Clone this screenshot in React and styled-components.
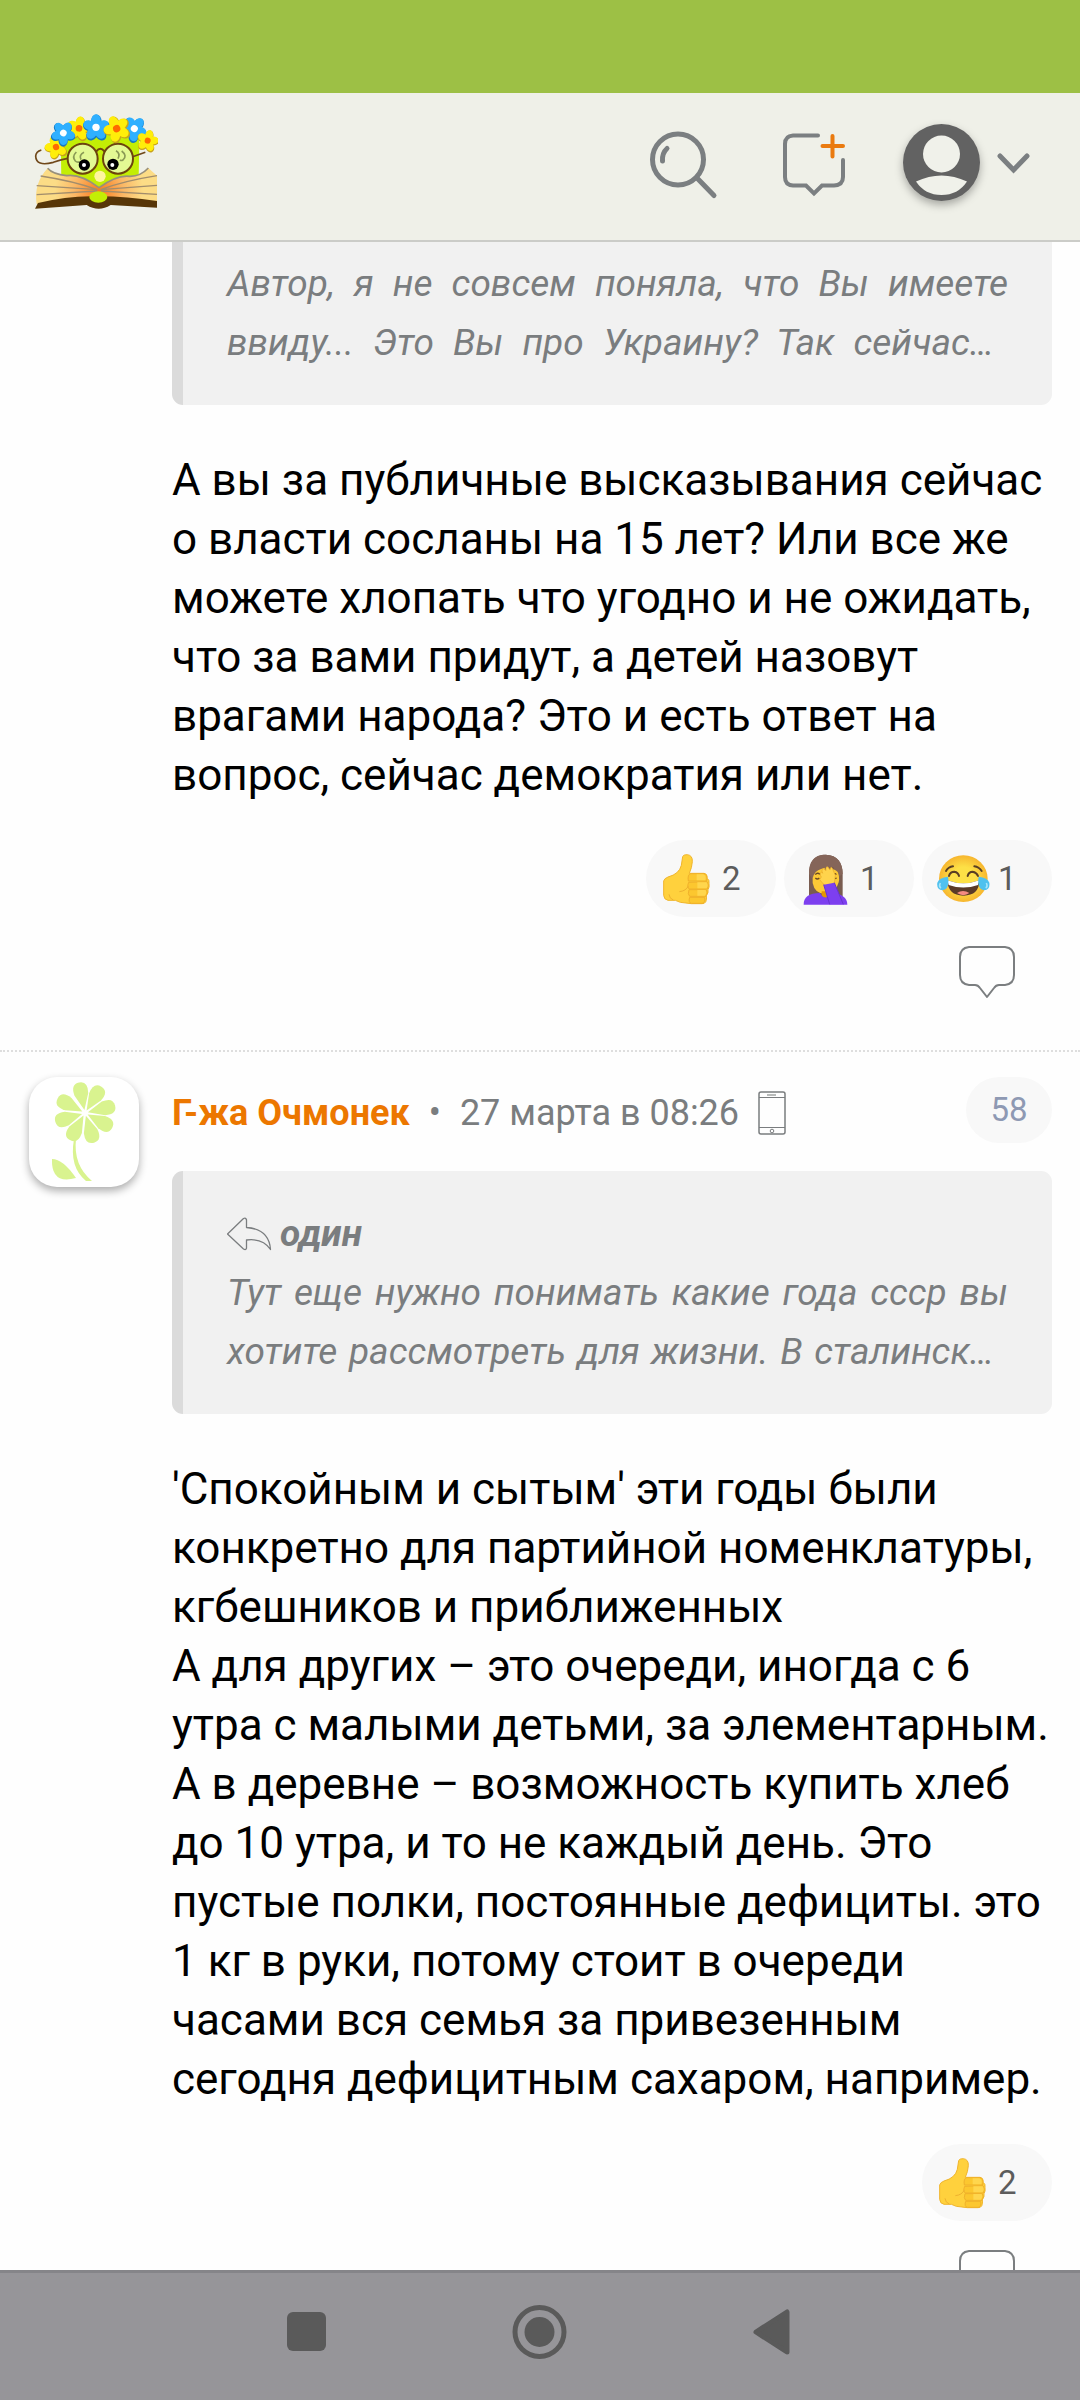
import React from "react";
import styled, { createGlobalStyle } from "styled-components";

const GlobalStyle = createGlobalStyle`
  * { box-sizing: border-box; }
  body {
    margin: 0;
    background: #fefefe;
    color: #000;
    font-family: Roboto, "Noto Sans", sans-serif;
  }
  button {
    margin: 0;
    padding: 0;
    border: 0;
    background: none;
    font: inherit;
    color: inherit;
    cursor: pointer;
  }
  svg { display: block; flex: none; }
`;

const Screen = styled.div`
  display: flex;
  flex-direction: column;
  height: 100vh;
`;

const StatusBar = styled.div`
  flex: none;
  height: 93px;
  background: #9dc045;
`;

const Header = styled.header`
  flex: none;
  display: flex;
  align-items: center;
  justify-content: space-between;
  padding: 19px 48px 31px 33px;
  background: #eff0e8;
  border-bottom: 2px solid #cbccc8;
`;

const Actions = styled.nav`
  display: flex;
  align-items: center;
  gap: 54px;
`;

const AccountButton = styled.button`
  display: flex;
  align-items: center;
  gap: 14px;
`;

const AccountPicture = styled.svg`
  overflow: visible;
  filter: drop-shadow(0 4px 4px rgba(0, 0, 0, 0.3));
`;

const Feed = styled.main`
  flex: 1;
  min-height: 0;
  overflow: hidden;
`;

const Comment = styled.article`
  display: grid;
  grid-template-columns: 110px minmax(0, 1fr);
  column-gap: 33px;
  padding: ${(p) => (p.$continued ? "0" : "25px")} 28px 51px 29px;

  & + & {
    border-top: 2px dotted #dedede;
  }
`;

const Content = styled.div`
  grid-column: 2;
`;

const Avatar = styled.a`
  display: block;
  width: 110px;
  height: 110px;
  overflow: hidden;
  border-radius: 28px;
  background: #fff;
  box-shadow: 0 4px 8px rgba(0, 0, 0, 0.32);
`;

const CommentHead = styled.div`
  display: flex;
  align-items: flex-start;
  justify-content: space-between;
  margin-bottom: 22px;
`;

const Meta = styled.div`
  display: flex;
  align-items: center;
  gap: 19px;
  font-size: 36px;
  line-height: 72px;
  color: #7a7d7f;
`;

const Author = styled.a`
  color: #ec7700;
  font-weight: 700;
  text-decoration: none;
`;

const CommentNumber = styled.a`
  min-width: 86px;
  border-radius: 33px;
  background: #f8f8f8;
  color: #8e99b3;
  font-size: 33px;
  line-height: 66px;
  text-align: center;
  text-decoration: none;
`;

const Quote = styled.blockquote`
  margin: 0;
  padding: ${(p) => (p.$continued ? "12px" : "33px")} 44px 33px;
  border-left: 11px solid #dbdbdb;
  border-radius: ${(p) => (p.$continued ? "0 0 11px 11px" : "11px")};
  background: #f1f1f1;
  color: #7a7d7f;
  font-size: 37px;
  font-style: italic;
  line-height: 59px;
`;

const QuoteAuthor = styled.div`
  display: flex;
  align-items: center;
  gap: 7px;
  font-weight: 700;
`;

const QuoteLine = styled.span`
  display: block;
  padding-right: ${(p) => (p.$cut ? "14px" : "0")};
  text-align: justify;
  text-align-last: justify;
  white-space: nowrap;
`;

const Body = styled.p`
  margin: 46px 0 35px;
  font-size: 44px;
  line-height: 59px;
`;

const Reactions = styled.div`
  display: flex;
  justify-content: flex-end;
  gap: 8px;
`;

const Reaction = styled.button`
  display: flex;
  align-items: center;
  gap: 7px;
  width: 130px;
  height: 77px;
  padding-left: 15px;
  border-radius: 39px;
  background: #f8f8f8;
  color: #5c5c5c;
  font-size: 33px;
`;

const ReplyRow = styled.div`
  display: flex;
  justify-content: flex-end;
  padding: 28px 36px 0 0;
`;

const SystemNav = styled.nav`
  flex: none;
  display: flex;
  justify-content: center;
  gap: 173px;
  padding: 29px 0 38px;
  border-top: 3px solid #858589;
  background: #969599;
`;

const PETALS = [0, 72, 144, 216, 288];

function Blossom({ x, y, fill, edge, heart, turn = 0, scale = 1 }) {
  return (
    <g transform={`translate(${x} ${y}) rotate(${turn}) scale(${scale})`}>
      {PETALS.map((a) => (
        <ellipse key={a} cx="0" cy="-20" rx="14" ry="18" fill={edge} transform={`translate(1 3) rotate(${a})`} />
      ))}
      {PETALS.map((a) => (
        <ellipse key={a} cx="0" cy="-19" rx="13" ry="17" fill={fill} transform={`rotate(${a})`} />
      ))}
      <circle r="10" fill={heart} />
    </g>
  );
}

function Logo() {
  const blue = { fill: "#2fb0ff", edge: "#1579c4", heart: "#fff" };
  const yellow = { fill: "#ffee0a", edge: "#c9a31a", heart: "#ff6a00" };
  return (
    <svg width="125" height="97" viewBox="39 21 375 291" role="img" aria-label="Логотип">
      <defs>
        <radialGradient id="pages" gradientUnits="userSpaceOnUse" cx="237" cy="258" r="165">
          <stop offset="0" stopColor="#f97a1c" />
          <stop offset="0.45" stopColor="#fbb866" />
          <stop offset="0.8" stopColor="#fcdc86" />
        </radialGradient>
      </defs>
      <path d="M122 100Q240 70 358 100L356 220L240 262L124 220Z" fill="#c3ee05" />
      <path d="M143 160Q120 165 100 172Q48 186 47 153Q48 140 64 135" fill="none" stroke="#70481a" strokeWidth="5" />
      <path d="M338 155L376 142" stroke="#70481a" strokeWidth="5" />
      <path d="M83 190Q98 208 140 212Q175 206 237 248Q292 208 330 214Q362 214 385 189L411 212V300L237 276L50 298Q40 235 83 190Z" fill="url(#pages)" />
      <path d="M83 190Q98 208 140 212Q182 206 237 248Q292 208 330 214Q362 214 385 189" fill="none" stroke="#98907c" strokeWidth="5" />
      <path d="M62 213Q160 228 232 254L50 242M232 258L50 269M411 212Q310 228 242 254L411 241M242 258L411 268" stroke="#a28d6c" strokeWidth="4" fill="none" />
      <path d="M45 311L54 294Q150 270 237 274Q320 274 411 288V308L272 300Q236 323 200 300Z" fill="#573608" />
      <ellipse cx="235" cy="276" rx="27" ry="17" fill="#c3ee05" />
      <circle cx="240" cy="214" r="17" fill="#fff5a0" />
      <circle cx="188" cy="161" r="45" fill="#e3f993" stroke="#6c430e" strokeWidth="6" />
      <circle cx="294" cy="161" r="45" fill="#e3f993" stroke="#6c430e" strokeWidth="6" />
      <path d="M229 139Q241 124 253 139" fill="none" stroke="#6c430e" strokeWidth="6" />
      <path d="M169 141Q155 155 166 168Q172 174 180 170M192 142Q176 150 183 164M288 137Q302 145 294 161M305 138Q323 152 309 165Q304 168 300 165" fill="none" stroke="#8a9a55" strokeWidth="5" />
      <circle cx="193" cy="180" r="17" />
      <circle cx="192" cy="180" r="6" fill="#fff" />
      <circle cx="279" cy="178" r="17" />
      <circle cx="277" cy="180" r="6" fill="#fff" />
      <Blossom x={108} y={126} turn={-20} scale={0.95} {...yellow} />
      <Blossom x={177} y={70} turn={10} scale={1} {...yellow} />
      <Blossom x={130} y={84} turn={35} scale={1} {...blue} />
      <Blossom x={343} y={71} turn={40} scale={1.05} {...blue} />
      <Blossom x={228} y={67} turn={0} scale={1.1} {...blue} />
      <Blossom x={290} y={71} turn={-25} scale={1.1} {...yellow} />
      <Blossom x={383} y={107} turn={15} scale={0.9} {...yellow} />
    </svg>
  );
}

function SearchIcon() {
  return (
    <svg width="77" height="78" viewBox="646 121 77 78" fill="none" stroke="#7b7f81" strokeWidth="5" strokeLinecap="round">
      <circle cx="678" cy="158.500" r="25.500" />
      <path d="M697 177L714 194.500M667 147.500Q662 152 662.500 160" />
    </svg>
  );
}

function NewTopicIcon() {
  return (
    <svg width="71" height="78" viewBox="777 121 71 78" fill="none" stroke="#7b7f81" strokeWidth="4" strokeLinecap="round">
      <path d="M818 134.500H793Q785 135 785 143V176Q785 184 793 184.500H806L814 192.500L822 184.500H834Q843 184 843 176V159" />
      <path d="M822.500 145H843M832.500 135V155.500" stroke="#ea7a0f" />
    </svg>
  );
}

function AccountIcon() {
  return (
    <AccountPicture width="80" height="78" viewBox="902 121 80 78">
      <circle cx="941.500" cy="161.500" r="38.500" fill="#626262" />
      <circle cx="941.500" cy="153" r="18.500" fill="#f0f1ea" />
      <path d="M916 180.500Q941.500 168.500 967 180.500Q958 194 941.500 194Q925 194 916 180.500Z" fill="#f0f1ea" />
    </AccountPicture>
  );
}

function ChevronIcon() {
  return (
    <svg width="36" height="78" viewBox="996 121 36 78" fill="none" stroke="#7b7f81" strokeWidth="5" strokeLinecap="round">
      <path d="M1000 155L1013.500 169L1027 155" />
    </svg>
  );
}

function ThumbEmoji() {
  return (
    <svg width="54" height="54" viewBox="123 120 162 162">
      <path d="M188 134Q190 127 202 128Q218 130 217 149Q216 166 208 184H252Q262 185 261 199Q269 203 267 215Q269 225 264 233Q266 244 259 250Q262 276 246 275Q215 277 181 271L166 265H144Q132 263 131 250V207Q133 199 144 195Q178 186 184 160Z" fill="#ffd13d" stroke="#f0b52c" strokeWidth="3" strokeLinejoin="round" />
      <path d="M212 185Q202 187 205 207H260Q264 186 252 185ZM206 211Q200 226 208 231H262Q269 220 261 209ZM207 233Q202 247 209 253H258Q266 241 259 233ZM209 256Q204 272 214 274H247Q257 271 254 256Z" fill="#fcc72f" stroke="#f0b12b" strokeWidth="3" />
      <path d="M230 187H250Q260 192 256 205H230ZM232 211H260Q266 221 260 229H232ZM232 234H257Q261 244 254 251H232Z" fill="#ffd64d" />
      <path d="M178 239Q198 237 205 222M147 247Q148 260 160 264" fill="none" stroke="#eeb12f" strokeWidth="3" />
    </svg>
  );
}

function FacepalmEmoji() {
  return (
    <svg width="54" height="54" viewBox="537 120 162 162">
      <path d="M617 128C576 128 567 160 567 185V258H668V185C668 153 652 128 617 128Z" fill="#795c50" />
      <path d="M567 185C567 150 580 128 617 128C652 128 668 153 668 185L656 195Q645 180 640 165Q600 165 588 180L577 200Z" fill="#856559" />
      <path d="M578 198Q584 176 603 171L613 167L617 174Q640 165 653 180Q660 197 656 211Q647 244 617 246Q584 246 578 213Z" fill="#fcc936" />
      <path d="M605 238H627V252Q616 264 605 252Z" fill="#e59600" />
      <path d="M551 278Q550 244 600 243Q616 270 632 243Q682 246 682 278Z" fill="#7d3fef" />
      <path d="M586 188Q592 180 600 187M586 198Q592 204 598 198M638 188Q645 182 649 188M645 200L650 198" stroke="#6b4b24" strokeWidth="4" fill="none" />
      <path d="M599 203L611 217L622 223L643 213L646 190L637 169Q632 161 630 174L624 165Q616 162 618 176L610 170Q603 171 608 184L605 180Q597 183 604 195Z" fill="#ffd34c" stroke="#e9a92b" strokeWidth="2" />
      <path d="M611 218L643 212L670 277H629Z" fill="#7d3fef" />
      <path d="M611 218L629 277M643 212L670 277" stroke="#6733cf" strokeWidth="3" />
    </svg>
  );
}

function JoyEmoji() {
  return (
    <svg width="54" height="54" viewBox="951 120 162 162">
      <defs>
        <radialGradient id="joy">
          <stop offset="0.5" stopColor="#fde046" />
          <stop offset="1" stopColor="#f7b62f" />
        </radialGradient>
      </defs>
      <ellipse cx="1030" cy="200" rx="73" ry="70" fill="url(#joy)" />
      <path d="M978 177Q985 165 999 163M1063 163Q1077 165 1085 177M987 192Q990 179 1003 179Q1015 181 1017 192M1043 192Q1046 179 1058 179Q1070 181 1074 192" fill="none" stroke="#5a3f23" strokeWidth="6" strokeLinecap="round" />
      <path d="M982 205Q1030 223 1078 205Q1078 251 1030 251Q984 251 982 205Z" fill="#5a3a28" />
      <path d="M982 205Q1030 223 1078 205L1074 219Q1030 234 986 219Z" fill="#fff" />
      <path d="M1011 243Q1029 231 1048 243Q1030 256 1011 243Z" fill="#f48b82" />
      <path d="M984 194Q990 233 967 235Q949 233 952 212Q957 197 984 194ZM1076 194Q1070 233 1093 235Q1111 233 1108 212Q1103 197 1076 194Z" fill="#4fc1ee" />
      <path d="M961 213Q956 224 963 228M1099 213Q1104 224 1097 228" fill="none" stroke="#a6e4fa" strokeWidth="5" />
    </svg>
  );
}

function BubbleIcon() {
  return (
    <svg width="58" height="54" viewBox="0 0 58 54" fill="none" stroke="#7b7e80" strokeWidth="2" strokeLinejoin="round">
      <path d="M11 2H47Q56 3 56 12V30Q56 39 47 40H41Q38 40 36 43L29 52L22 43Q20 40 17 40H11Q2 39 2 30V12Q2 3 11 2Z" />
    </svg>
  );
}

function PhoneIcon() {
  return (
    <svg width="28" height="44" viewBox="0 0 28 44" fill="none" stroke="#7a7d7f">
      <rect x="1" y="1" width="26" height="42" rx="2" strokeWidth="1.500" />
      <path d="M1 6.500H27M1 36.500H27" />
      <path d="M9 4H18" stroke="#b8bbba" strokeWidth="2" />
      <circle cx="14" cy="40" r="1.800" />
    </svg>
  );
}

function ReplyArrowIcon() {
  return (
    <svg width="46" height="36" viewBox="227 1217 46 36" fill="none" stroke="#7a7d7f" strokeWidth="1.300" strokeLinejoin="round">
      <path d="M227.500 1235L243.500 1219.500Q246 1218.500 246.500 1221V1228.500Q269 1230 270.500 1250.500Q263 1239 246.500 1241V1249Q246 1251.500 243.500 1250Z" />
    </svg>
  );
}

const DAISY = [-11, 32, 76, 119, 163, 209, 253, 298];

function DaisyPicture() {
  return (
    <svg width="110" height="110" viewBox="0 0 110 110" fill="#d9f38f">
      {DAISY.map((a) => (
        <path key={a} d="M0 -3L-7 -19Q-9 -31 0 -31Q9 -31 7 -19Z" transform={`translate(56 36) rotate(${a})`} />
      ))}
      <path d="M45 62Q40 90 57 104H63Q44 88 47 62Z" />
      <path d="M23 82Q34 82 47 101Q22 108 23 82Z" />
    </svg>
  );
}

const EMOJI = { thumb: ThumbEmoji, facepalm: FacepalmEmoji, joy: JoyEmoji };

function CommentFooter({ reactions }) {
  return (
    <>
      <Reactions>
        {reactions.map(([name, label, count]) => {
          const Emoji = EMOJI[name];
          return (
            <Reaction key={name} type="button" aria-label={`${label}: ${count}`}>
              <Emoji />
              {count}
            </Reaction>
          );
        })}
      </Reactions>
      <ReplyRow>
        <button type="button" aria-label="Ответить"><BubbleIcon /></button>
      </ReplyRow>
    </>
  );
}

export default function App() {
  return (
    <>
      <GlobalStyle />
      <Screen>
        <StatusBar />
        <Header>
          <a href="#home" aria-label="На главную"><Logo /></a>
          <Actions>
            <button type="button" aria-label="Поиск"><SearchIcon /></button>
            <button type="button" aria-label="Новая тема"><NewTopicIcon /></button>
            <AccountButton type="button" aria-label="Профиль">
              <AccountIcon />
              <ChevronIcon />
            </AccountButton>
          </Actions>
        </Header>

        <Feed>
          <Comment $continued>
            <Content>
              <Quote $continued>
                <QuoteLine>Автор, я не совсем поняла, что Вы имеете</QuoteLine>
                <QuoteLine $cut>ввиду... Это Вы про Украину? Так сейчас…</QuoteLine>
              </Quote>
              <Body>
                А вы за публичные высказывания сейчас о власти сосланы на 15 лет? Или все же можете хлопать что
                угодно и не ожидать, что за вами придут, а детей назовут врагами народа? Это и есть ответ на
                вопрос, сейчас демократия или нет.
              </Body>
              <CommentFooter
                reactions={[["thumb", "Нравится", 2], ["facepalm", "Рука-лицо", 1], ["joy", "Смешно", 1]]}
              />
            </Content>
          </Comment>

          <Comment>
            <Avatar href="#author" aria-label="Г-жа Очмонек"><DaisyPicture /></Avatar>
            <Content>
              <CommentHead>
                <Meta>
                  <Author href="#author">Г-жа Очмонек</Author>
                  <span>•</span>
                  <time>27 марта в 08:26</time>
                  <PhoneIcon />
                </Meta>
                <CommentNumber href="#58">58</CommentNumber>
              </CommentHead>
              <Quote>
                <QuoteAuthor>
                  <ReplyArrowIcon />
                  один
                </QuoteAuthor>
                <QuoteLine>Тут еще нужно понимать какие года ссср вы</QuoteLine>
                <QuoteLine $cut>хотите рассмотреть для жизни. В сталинск…</QuoteLine>
              </Quote>
              <Body>
                'Спокойным и сытым' эти годы были конкретно для партийной номенклатуры, кгбешников и приближенных
                <br />
                А для других – это очереди, иногда с 6 утра с малыми детьми, за элементарным.
                <br />
                А в деревне – возможность купить хлеб до 10 утра, и то не каждый день. Это пустые полки,
                постоянные дефициты. это 1 кг в руки, потому стоит в очереди часами вся семья за привезенным
                сегодня дефицитным сахаром, например.
              </Body>
              <CommentFooter reactions={[["thumb", "Нравится", 2]]} />
            </Content>
          </Comment>
        </Feed>

        <SystemNav>
          <button type="button" aria-label="Недавние">
            <svg width="60" height="60" viewBox="0 0 60 60" fill="#5a5a5a"><rect x="10" y="10" width="39" height="39" rx="6" /></svg>
          </button>
          <button type="button" aria-label="Домой">
            <svg width="60" height="60" viewBox="0 0 60 60" fill="#5a5a5a">
              <circle cx="29.500" cy="30" r="24.500" fill="none" stroke="#5a5a5a" strokeWidth="5" />
              <circle cx="29.500" cy="30" r="15" />
            </svg>
          </button>
          <button type="button" aria-label="Назад">
            <svg width="60" height="60" viewBox="0 0 60 60" fill="#5a5a5a" stroke="#5a5a5a" strokeWidth="5" strokeLinejoin="round">
              <path d="M13 30L44 10V50Z" />
            </svg>
          </button>
        </SystemNav>
      </Screen>
    </>
  );
}
